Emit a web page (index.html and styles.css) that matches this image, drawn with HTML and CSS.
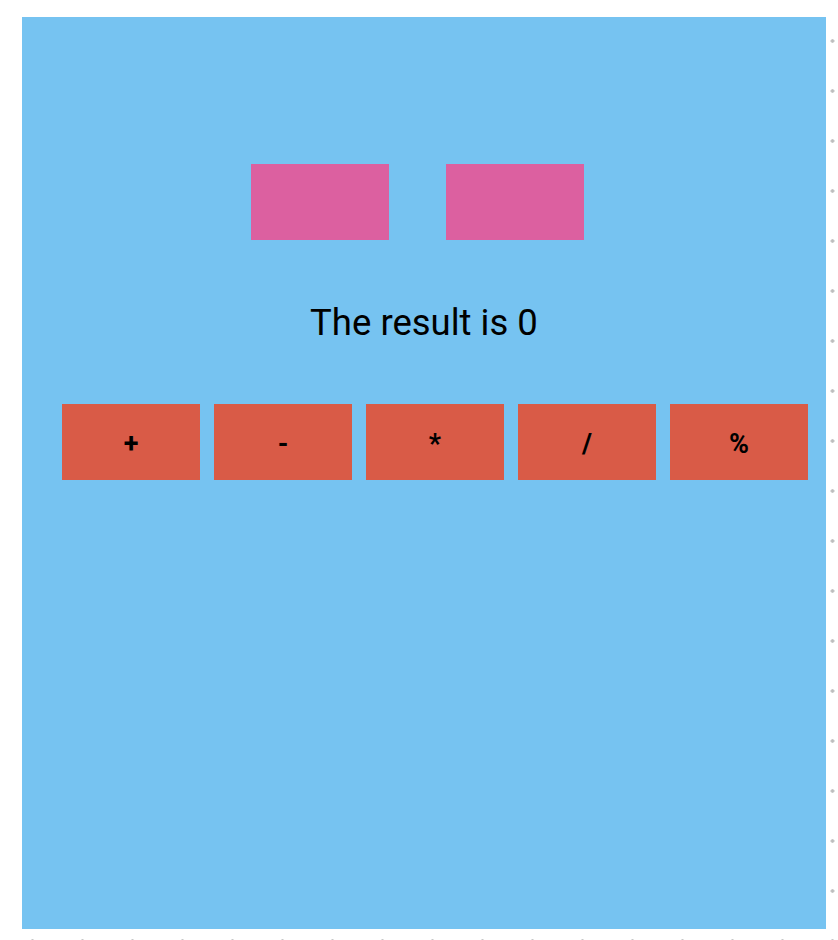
FILE: index.html
```html
<!DOCTYPE html>
<html>
<head>
<meta charset="utf-8">
<link rel="stylesheet" href="styles.css">
</head>
<body>
<div class="panel">
  <div class="inputs">
    <div class="input"></div>
    <div class="input"></div>
  </div>
  <div class="result">The result is 0</div>
  <div class="ops">
    <div class="op">+</div>
    <div class="op">-</div>
    <div class="op">*</div>
    <div class="op">/</div>
    <div class="op">%</div>
  </div>
</div>
</body>
</html>
```
FILE: styles.css
```css
html, body {
  margin: 0;
  padding: 0;
}
body {
  width: 838px;
  height: 940px;
  overflow: hidden;
  background-color: #ffffff;
  background-image: radial-gradient(circle, #bdbdbd 1.5px, rgba(189,189,189,0) 2px);
  background-size: 50px 50px;
  background-position: 7.5px 16px;
  font-family: Roboto, "Liberation Sans", sans-serif;
}
.panel {
  margin: 17px 0 0 22px;
  width: 804px;
  height: 912px;
  background: #76c3f1;
  padding-top: 147px;
  box-sizing: border-box;
  display: flex;
  flex-direction: column;
}
.inputs {
  display: flex;
  gap: 57px;
  padding-left: 229px;
}
.input {
  width: 138px;
  height: 76px;
  background: #dc60a0;
}
.result {
  margin-top: 62px;
  height: 42px;
  line-height: 42px;
  font-size: 36.5px;
  text-align: center;
  color: #000;
}
.ops {
  margin-top: 60px;
  display: flex;
  gap: 14px;
  padding-left: 40px;
}
.op {
  width: 138px;
  height: 76px;
  box-sizing: border-box;
  padding-top: 4px;
  background: #d95b47;
  display: flex;
  align-items: center;
  justify-content: center;
  font-size: 27px;
  font-weight: bold;
  color: #000;
}
```
